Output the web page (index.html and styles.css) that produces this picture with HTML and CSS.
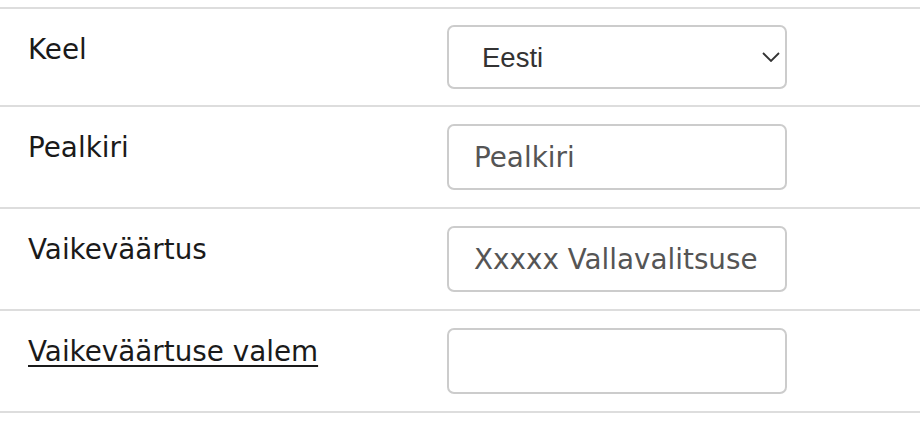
FILE: index.html
```html
<!DOCTYPE html>
<html lang="et">
<head>
<meta charset="utf-8">
<title>Vorm</title>
<link rel="stylesheet" href="styles.css">
</head>
<body>
<div class="form">
  <div class="row row-first">
    <div class="label">Keel</div>
    <div class="field">
      <div class="select-wrap">
        <select class="select">
          <option>Eesti</option>
        </select>
        <svg class="chevron" width="18" height="10" viewBox="0 0 18 10" aria-hidden="true">
          <path d="M1 1 L9 9 L17 1" fill="none" stroke="#333" stroke-width="1.8"/>
        </svg>
      </div>
    </div>
  </div>
  <div class="row">
    <div class="label">Pealkiri</div>
    <div class="field"><input class="input" type="text" placeholder="Pealkiri"></div>
  </div>
  <div class="row">
    <div class="label">Vaikeväärtus</div>
    <div class="field"><input class="input" type="text" value="Xxxxx Vallavalitsuse"></div>
  </div>
  <div class="row row-last">
    <div class="label"><a class="link" href="#">Vaikeväärtuse valem</a></div>
    <div class="field"><input class="input" type="text"></div>
  </div>
</div>
</body>
</html>
```

FILE: styles.css
```css
html, body {
  margin: 0;
  padding: 0;
  background: #fff;
}
body {
  font-family: "DejaVu Sans", Verdana, sans-serif;
  font-size: 27.8px;
  color: #1a1a1a;
}
.form {
  padding-top: 7px;
}
.row {
  display: flex;
  align-items: flex-start;
  border-top: 2px solid #dddddd;
}
.row-last {
  border-bottom: 2px solid #dddddd;
}
.label {
  box-sizing: border-box;
  width: 447px;
  padding: 24px 0 0 28px;
  line-height: normal;
}
.link {
  color: #1a1a1a;
  text-decoration: underline;
  text-decoration-thickness: 2px;
  text-underline-offset: 4px;
}
.field {
  padding: 17px 0;
}
.row-first .field {
  padding: 16px 0;
}
.input {
  box-sizing: border-box;
  display: block;
  width: 340px;
  height: 66px;
  margin: 0;
  padding: 0 25px;
  border: 2px solid #cccccc;
  border-radius: 7px;
  font-family: "DejaVu Sans", Verdana, sans-serif;
  font-size: 27.8px;
  color: #555555;
  background: #fff;
  outline: none;
}
.input::placeholder {
  color: #555555;
  opacity: 1;
}
.select-wrap {
  position: relative;
  width: 340px;
}
.select {
  box-sizing: border-box;
  display: block;
  width: 340px;
  height: 64px;
  margin: 0;
  padding: 0 40px 0 33px;
  border: 2px solid #cccccc;
  border-radius: 7px;
  font-family: "Liberation Sans", Arial, sans-serif;
  font-size: 27.5px;
  color: #333333;
  background: #fff;
  -webkit-appearance: none;
  appearance: none;
  outline: none;
}
.chevron {
  position: absolute;
  right: 7px;
  top: 27px;
  pointer-events: none;
}
```
